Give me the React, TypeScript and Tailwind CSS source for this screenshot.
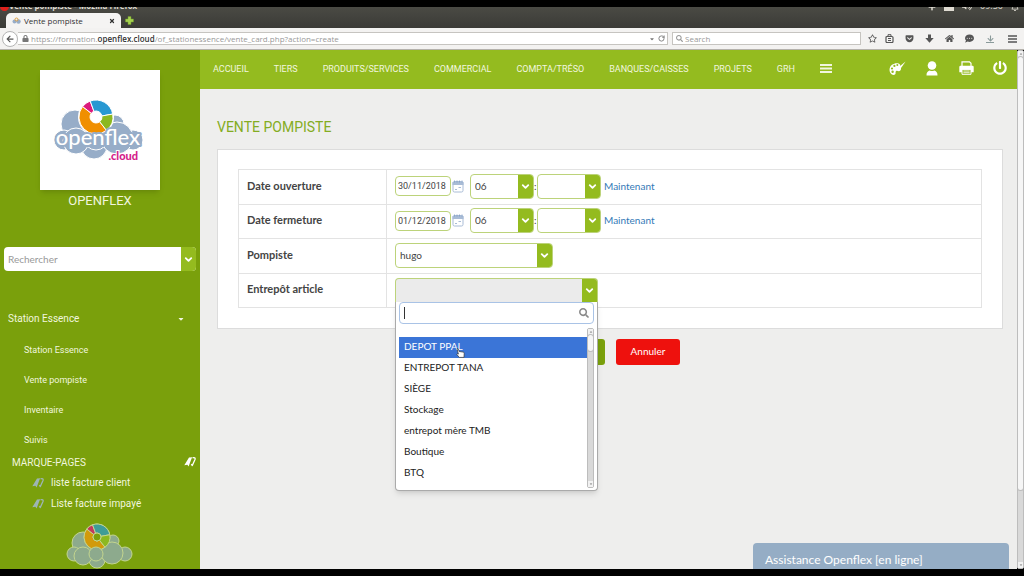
import { useState, type ReactNode } from 'react';
import clsx from 'clsx';
import {
  FaArrowDown,
  FaArrowLeft,
  FaCaretDown,
  FaCommentDots,
  FaGetPocket,
  FaHome,
  FaLock,
  FaPlus,
  FaPowerOff,
  FaRegBell,
  FaRegStar,
  FaSearch,
  FaVolumeUp,
} from 'react-icons/fa';
import { ChevronDown, RotateCw, X } from 'lucide-react';

const NAV_ITEMS = [
  'ACCUEIL',
  'TIERS',
  'PRODUITS/SERVICES',
  'COMMERCIAL',
  'COMPTA/TRÉSO',
  'BANQUES/CAISSES',
  'PROJETS',
  'GRH',
];

const MENU_ITEMS = ['Station Essence', 'Vente pompiste', 'Inventaire', 'Suivis'];

const BOOKMARKS = ['liste facture client', 'Liste facture impayé'];

const WAREHOUSES = [
  'DEPOT PPAL',
  'ENTREPOT TANA',
  'SIÈGE',
  'Stockage',
  'entrepot mère TMB',
  'Boutique',
  'BTQ',
];

// Ring slice between two angles (degrees, clockwise from 3 o'clock)
function slice(cx: number, cy: number, outer: number, inner: number, from: number, to: number) {
  const point = (r: number, deg: number) => {
    const a = (deg * Math.PI) / 180;
    return `${(cx + r * Math.cos(a)).toFixed(2)} ${(cy + r * Math.sin(a)).toFixed(2)}`;
  };
  const large = to - from > 180 ? 1 : 0;
  return `M${point(outer, from)}A${outer} ${outer} 0 ${large} 1 ${point(outer, to)}L${point(inner, to)}A${inner} ${inner} 0 ${large} 0 ${point(inner, from)}Z`;
}

function OpenflexLogo() {
  return (
    <svg viewBox="0 0 120 120" className="size-full" role="img" aria-label="openflex.cloud">
      <g fill="#97adc8" stroke="#fff" strokeWidth="1">
        <circle cx="75" cy="54" r="9" />
        <circle cx="35" cy="54" r="14" />
        <circle cx="54" cy="76" r="13" />
        <circle cx="24" cy="70" r="10" />
        <circle cx="93" cy="70" r="10" />
        <circle cx="36" cy="71" r="13" />
        <circle cx="77" cy="68" r="16" />
        <circle cx="56" cy="68" r="12" />
      </g>
      <circle cx="56" cy="47" r="18" fill="#fff" />
      <g stroke="#fff" strokeWidth="1">
        <path d={slice(56, 47, 17, 6, 52, 218)} fill="#f08f00" />
        <path d={slice(56, 47, 17, 6, 218, 250)} fill="#dc1a7c" />
        <path d={slice(56, 47, 17, 6, 250, 350)} fill="#2898d2" />
        <path d={slice(56, 47, 17, 6, 350, 412)} fill="#8cb820" />
      </g>
      <text
        x="58"
        y="75"
        textAnchor="middle"
        fontSize="22"
        className="font-['Lato',sans-serif] font-medium"
        fill="#fff"
        stroke="#97adc8"
        strokeWidth="4"
        strokeLinejoin="round"
        paintOrder="stroke"
      >
        openflex
      </text>
      <text
        x="98"
        y="90"
        textAnchor="end"
        fontSize="11"
        className="font-['Lato',sans-serif] font-black"
        fill="#d4218a"
        stroke="#fff"
        strokeWidth="2"
        paintOrder="stroke"
      >
        .cloud
      </text>
    </svg>
  );
}

function FooterCloud() {
  return (
    <svg viewBox="0 0 67 46" className="w-[67px] h-[46px]" aria-hidden="true">
      <g fill="#8daa8d" stroke="#c3d58f" strokeWidth="1">
        <circle cx="47" cy="18" r="6" />
        <circle cx="17" cy="20" r="11" />
        <circle cx="31" cy="37" r="8" />
        <circle cx="8" cy="31" r="7" />
        <circle cx="59" cy="31" r="7" />
        <circle cx="17" cy="33" r="9" />
        <circle cx="46" cy="30" r="11" />
        <circle cx="31" cy="14" r="13" />
        <path d={slice(31, 14, 13, 4, 52, 218)} fill="#d29a0a" />
        <path d={slice(31, 14, 13, 4, 218, 250)} fill="#c43a5c" />
        <path d={slice(31, 14, 13, 4, 250, 350)} fill="#3f9c98" />
        <path d={slice(31, 14, 13, 4, 350, 412)} fill="#8cb820" />
        <circle cx="31" cy="14" r="4" fill="#7aa00c" />
        <circle cx="30" cy="31" r="7" />
      </g>
    </svg>
  );
}

function BookmarksIcon({ className }: { className?: string }) {
  return (
    <svg viewBox="0 0 12 10" className={className} aria-hidden="true">
      <path d="M5 .6 8.600.3Q7.800 1 7.400 2L4.600 9.500 3.400 7.700.3 8.200z" fill="currentColor" />
      <path
        d="M8.600.8q2.900-.5 2.500 1.400L8.300 8.600 7.300 7.200"
        fill="none"
        stroke="currentColor"
        strokeWidth="1.300"
        strokeLinejoin="round"
      />
    </svg>
  );
}

function PaletteIcon() {
  return (
    <svg viewBox="0 0 17 15" className="w-[17px] h-[15px]" aria-hidden="true">
      <path
        d="M11 3.4C9.5 1.6 5.6 1.8 3 3.8.4 5.8-.2 9.6 1.4 12c1.3 2 3.7 2.4 4.8 1.3.9-1-.2-2.2.8-3.1 1.1-1 2.7.6 4-.4.8-.6 1-1.6 1-2.6"
        fill="#fff"
      />
      <path d="M16.6.4 10.5 5.6 8.6 8.4 12 7z" fill="#fff" />
      <g fill="#94bb1f">
        <circle cx="3" cy="7.500" r="1.100" />
        <circle cx="5.400" cy="4.900" r="1.100" />
        <circle cx="8.300" cy="4" r="1" />
        <circle cx="3.600" cy="10.800" r="1.200" />
      </g>
    </svg>
  );
}

function UserIcon() {
  return (
    <svg viewBox="0 0 12 15" className="w-3 h-[15px]" fill="#fff" aria-hidden="true">
      <circle cx="6" cy="4.500" r="4.300" />
      <path d="M.5 14.500c-.3-3 1.700-4.700 3.300-4.900q2.200 1 4.400 0c1.600.2 3.600 1.900 3.300 4.900z" />
    </svg>
  );
}

function PrinterIcon() {
  return (
    <svg viewBox="0 0 15 14" className="w-[15px] h-[14px]" aria-hidden="true">
      <path d="M3 5V.8h7.500L12 2.300V5" fill="none" stroke="#fff" strokeWidth="1.200" />
      <path d="M1.500 4.800h12q1.200 0 1.200 1.200v5.200H.3V6q0-1.200 1.200-1.200z" fill="#fff" />
      <path d="M3 8.400h9v4.900H3z" fill="#94bb1f" stroke="#fff" strokeWidth="1" />
      <path d="M4.400 10h6.200M4.400 11.700h6.200" stroke="#fff" strokeWidth=".8" />
    </svg>
  );
}

function CalendarIcon() {
  return (
    <svg viewBox="0 0 12 13" className="w-3 h-[13px]" aria-hidden="true">
      <rect x="1" y="1.500" width="10" height="10.500" rx="1.500" fill="#fff" stroke="#a9bcd6" />
      <path d="M.5 2h11v3H.5z" fill="#a9bcd6" />
      <path d="M2.500.5v2M5 .5v2M7.500.5v2M10 .5v2" stroke="#7f9cc4" strokeWidth=".8" />
      <path d="M3 9.500h2M6.500 7.500h2.500" stroke="#a9bcd6" />
    </svg>
  );
}

function ChevronBox() {
  return (
    <span className="pointer-events-none flex w-[15px] shrink-0 items-center justify-center bg-[#94bb1f]">
      <ChevronDown className="size-[11px] text-white" strokeWidth={4} />
    </span>
  );
}

function FlexSelect({
  id,
  label,
  options,
  className,
}: {
  id?: string;
  label: string;
  options: string[];
  className?: string;
}) {
  return (
    <div
      className={clsx(
        'flex h-[25px] overflow-hidden rounded-[4px] border border-[#bcd37a] bg-white',
        className,
      )}
    >
      <select
        id={id}
        aria-label={label}
        className="min-w-0 flex-1 appearance-none pl-1 text-[10px] text-[#444] outline-none"
      >
        {options.map((option) => (
          <option key={option}>{option}</option>
        ))}
      </select>
      <ChevronBox />
    </div>
  );
}

function DateField({ id, value }: { id: string; value: string }) {
  return (
    <div className="flex items-center">
      <input
        id={id}
        defaultValue={value}
        className="h-5 w-14 rounded-[4px] border border-[#bcd37a] bg-white pl-[2px] font-['Roboto',sans-serif] text-[9px] text-[#444] outline-none"
      />
      <button type="button" aria-label="Calendrier" className="ml-px">
        <CalendarIcon />
      </button>
      <FlexSelect label="Heure" options={['06']} className="ml-[6px] w-16" />
      <span className="w-[3px] text-[10px] text-[#444]">:</span>
      <FlexSelect label="Minute" options={['']} className="w-16" />
      <a href="#" className="ml-[3px] text-[10px] text-[#337ab7]">
        Maintenant
      </a>
    </div>
  );
}

function WarehousePicker() {
  const [hovered, setHovered] = useState(WAREHOUSES[0]);

  return (
    <div className="relative w-[203px]">
      <button
        type="button"
        id="warehouse"
        aria-haspopup="listbox"
        aria-expanded="true"
        className="flex h-6 w-full overflow-hidden rounded-t-[4px] border border-b-0 border-[#bcd37a] bg-[#ebebeb]"
      >
        <span className="flex-1" />
        <span className="flex h-full">
          <ChevronBox />
        </span>
      </button>
      <div className="absolute top-6 left-0 z-10 w-full rounded-b-[4px] border border-t-0 border-[#aaa] bg-white px-[3px] pb-[2px] shadow-md">
        <div className="flex h-[22px] items-center rounded-[4px] border border-[#a9c3e6] bg-white px-1">
          <span className="h-3 w-px bg-[#333]" />
          <input aria-label="Rechercher un entrepôt" className="min-w-0 flex-1 text-[10px] outline-none" />
          <FaSearch className="size-[10px] text-[#8a8a8a]" />
        </div>
        <div className="mt-1 flex h-40">
          <ul role="listbox" aria-labelledby="warehouse-label" className="flex-1 overflow-hidden pt-[9px]">
            {WAREHOUSES.map((name) => (
              <li
                key={name}
                role="option"
                aria-selected={name === hovered}
                onMouseEnter={() => setHovered(name)}
                className={clsx(
                  'h-[21px] px-[5px] text-[10px] leading-[19px]',
                  name === hovered ? 'bg-[#3b75d7] text-white' : 'text-[#222]',
                )}
              >
                {name}
              </li>
            ))}
          </ul>
          <Scrollbar className="w-[7px]" thumb="h-4" />
        </div>
        <Pointer />
      </div>
    </div>
  );
}

function Pointer() {
  return (
    <svg viewBox="0 0 9 10" className="absolute top-[46px] left-[60px] w-[9px] h-[10px]" aria-hidden="true">
      <path
        d="M1 .6q1-.4 1.400.6l.8 2.300 4 .6q1.200.3 1 1.500L8 9.400H3.200L.8 6.300q.4-1 1.600-.2z"
        fill="#fff"
        stroke="#333"
        strokeWidth=".7"
      />
    </svg>
  );
}

function Scrollbar({ className, thumb }: { className?: string; thumb: string }) {
  return (
    <div
      className={clsx(
        'flex shrink-0 flex-col items-center rounded-[2px] border border-[#bdbdbd] bg-[#d9d9d9]',
        className,
      )}
      aria-hidden="true"
    >
      <span className="flex h-[6px] w-full items-center justify-center bg-[#f2f2f2]">
        <FaCaretDown className="size-1 rotate-180 text-[#777]" />
      </span>
      <span className={clsx('w-full rounded-[3px] bg-[#f6f6f6] ring-1 ring-[#bdbdbd]', thumb)} />
      <span className="flex-1" />
      <span className="flex h-[6px] w-full items-center justify-center bg-[#f2f2f2]">
        <FaCaretDown className="size-1 text-[#777]" />
      </span>
    </div>
  );
}

function BrowserChrome() {
  return (
    <div className="shrink-0 font-['Open_Sans',sans-serif]">
      <div className="bg-gradient-to-b from-[#4a4a44] to-[#3b3b37]">
        <div className="flex h-1 items-end justify-between overflow-hidden pr-[5px] text-[#dfdbd2]">
          <span className="flex items-end">
            <span className="size-[9px] rounded-full bg-[#e0201b]" />
            <span className="text-[8px] leading-[10px] font-bold">Vente pompiste - Mozilla Firefox</span>
          </span>
          <span className="flex items-end gap-2">
            <FaPlus className="size-2" />
            <span className="h-2 w-[10px] bg-[#dfdbd2]" />
            <FaVolumeUp className="size-[10px]" />
            <span className="text-[9px] leading-[10px]">09:50</span>
            <FaRegBell className="size-2" />
          </span>
        </div>
        <div className="flex h-[17px] items-end">
          <div className="ml-[6px] flex h-[15px] w-[115px] items-center rounded-t-[5px] bg-[#f5f4f3] px-[6px]">
            <svg viewBox="0 0 9 7" className="w-[9px] h-[7px]" aria-hidden="true">
              <circle cx="2.500" cy="4.500" r="2" fill="#97adc8" />
              <circle cx="6.500" cy="4.500" r="2.200" fill="#97adc8" />
              <circle cx="4.500" cy="2.500" r="1.500" fill="none" stroke="#e0a040" />
            </svg>
            <span className="ml-[3px] flex-1 text-[8px] text-[#333]">Vente pompiste</span>
            <button type="button" aria-label="Fermer l’onglet">
              <X className="size-[6px] text-[#333]" strokeWidth={5} />
            </button>
          </div>
          <button type="button" aria-label="Nouvel onglet" className="mb-[3px] ml-1">
            <svg viewBox="0 0 9 9" className="size-[9px]" aria-hidden="true">
              <path d="M3 .5h3V3h2.500v3H6v2.500H3V6H.5V3H3z" fill="#a5d14f" stroke="#6f9a2a" strokeWidth=".5" />
            </svg>
          </button>
        </div>
      </div>

      <div className="flex h-[22px] items-center border-b border-[#b5b2ac] bg-[#f3f2f1] pr-[7px] text-[#555]">
        <button
          type="button"
          aria-label="Page précédente"
          className="ml-[2px] flex size-4 items-center justify-center rounded-full border border-[#b4b4b4] bg-white"
        >
          <FaArrowLeft className="size-2" />
        </button>
        <div className="flex h-[13px] min-w-0 flex-1 items-center border border-l-0 border-[#c6c4c0] bg-white pr-[2px] pl-1">
          <FaLock className="size-[7px] text-[#777]" />
          <span className="ml-[2px] flex-1 text-[8px] leading-3 whitespace-nowrap text-[#999]">
            https://formation.<span className="font-semibold text-[#333]">openflex.cloud</span>
            /of_stationessence/vente_card.php?action=create
          </span>
          <FaCaretDown className="size-[6px] text-[#777]" />
          <RotateCw className="ml-[3px] size-[7px] text-[#777]" strokeWidth={3} />
        </div>
        <label className="ml-1 flex h-[13px] w-[189px] items-center border border-[#c6c4c0] bg-white pl-[3px]">
          <FaSearch className="size-[7px] text-[#999]" />
          <input
            aria-label="Search"
            placeholder="Search"
            className="ml-[2px] min-w-0 flex-1 text-[8px] outline-none placeholder:text-[#999]"
          />
        </label>
        <div className="ml-[7px] flex items-center">
          <FaRegStar className="size-[9px]" />
          <svg viewBox="0 0 9 9" className="ml-2 size-[9px]" fill="none" aria-hidden="true">
            <rect x="1" y="2.500" width="7" height="6" rx="1" stroke="#555" strokeWidth="1.200" />
            <path d="M3 2.500V.7h3v1.800M3 4.500h3M3 6.500h3" stroke="#555" />
          </svg>
          <FaGetPocket className="ml-[11px] size-[9px]" />
          <svg viewBox="0 0 9 9" className="ml-[11px] size-[9px]" fill="#555" aria-hidden="true">
            <path d="M3 .5h3V4h2.700L4.500 8.700.3 4H3z" />
          </svg>
          <FaHome className="ml-[11px] size-[9px]" />
          <FaCommentDots className="ml-[11px] size-[9px]" />
          <span className="ml-3 flex flex-col items-center text-[#8a9a9a]">
            <FaArrowDown className="size-[7px]" />
            <span className="h-px w-2 bg-current" />
          </span>
          <svg viewBox="0 0 9 8" className="ml-[14px] h-2 w-[9px]" aria-hidden="true">
            <path d="M0 1h9M0 4h9M0 7h9" stroke="#555" strokeWidth="1.700" />
          </svg>
        </div>
      </div>
    </div>
  );
}

function Sidebar() {
  return (
    <aside className="flex w-[200px] shrink-0 flex-col overflow-hidden bg-[#7aa00c] pt-5 text-[#f1f6df]">
      <div className="mx-10 h-[120px] shrink-0 bg-white shadow-md">
        <OpenflexLogo />
      </div>
      <p className="mt-[3px] text-center text-[13px] leading-4">OPENFLEX</p>

      <div className="mx-1 mt-[38px] flex h-6 shrink-0 overflow-hidden rounded-[4px] bg-white">
        <input
          aria-label="Rechercher"
          placeholder="Rechercher"
          className="min-w-0 flex-1 pl-1 font-['Lato',sans-serif] text-[10px] outline-none placeholder:text-[#999]"
        />
        <button type="button" aria-label="Lancer la recherche" className="flex">
          <ChevronBox />
        </button>
      </div>

      <button type="button" className="mt-10 flex h-4 items-center justify-between pr-[15px] pl-2 text-[10px]">
        Station Essence
        <FaCaretDown className="size-2" />
      </button>
      <nav className="mt-2 flex flex-col pl-6">
        {MENU_ITEMS.map((item) => (
          <a key={item} href="#" className="text-[9px] leading-[30px]">
            {item}
          </a>
        ))}
      </nav>

      <div className="flex h-4 items-center justify-between pr-1 pl-3 text-[10px]">
        <span>MARQUE-PAGES</span>
        <BookmarksIcon className="h-[10px] w-3 text-white" />
      </div>
      <ul className="mt-[2px]">
        {BOOKMARKS.map((bookmark) => (
          <li key={bookmark} className="flex h-[21px] items-center pl-8">
            <BookmarksIcon className="h-[10px] w-3 text-[#9db5b5]" />
            <a href="#" className="ml-[7px] text-[10px]">
              {bookmark}
            </a>
          </li>
        ))}
      </ul>
      <div className="mt-[9px] ml-[66px]">
        <FooterCloud />
      </div>
    </aside>
  );
}

function TopNav() {
  return (
    <header className="flex h-[39px] shrink-0 items-center bg-[#94bb1f] pr-[10px] pl-[13px]">
      <nav className="flex items-center gap-[25px]">
        {NAV_ITEMS.map((item) => (
          <a key={item} href="#" className="text-[9px] text-[#f1f6df]">
            {item}
          </a>
        ))}
        <button type="button" aria-label="Plus" className="pb-[3px]">
          <svg viewBox="0 0 12 9" className="h-[9px] w-3" aria-hidden="true">
            <path d="M0 1h12M0 4.500h12M0 8h12" stroke="#f1f6df" strokeWidth="1.800" />
          </svg>
        </button>
      </nav>
      <div className="ml-auto flex items-center pb-[3px]">
        <button type="button" aria-label="Thème">
          <PaletteIcon />
        </button>
        <button type="button" aria-label="Utilisateur" className="ml-5">
          <UserIcon />
        </button>
        <button type="button" aria-label="Imprimer" className="ml-[21px]">
          <PrinterIcon />
        </button>
        <button type="button" aria-label="Déconnexion" className="ml-[19px]">
          <FaPowerOff className="size-[14px] text-white" />
        </button>
      </div>
    </header>
  );
}

function FormRow({
  id,
  label,
  htmlFor,
  children,
}: {
  id?: string;
  label: string;
  htmlFor: string;
  children: ReactNode;
}) {
  return (
    <tr className="h-[34px] border border-[#e3e3e3] odd:h-[35px]">
      <th
        scope="row"
        className="w-[148px] border-r border-[#e3e3e3] pb-[2px] pl-2 text-left text-[11px] font-bold text-[#444]"
      >
        <label id={id} htmlFor={htmlFor}>
          {label}
        </label>
      </th>
      <td className="pb-[2px] pl-2">{children}</td>
    </tr>
  );
}

export default function App() {
  return (
    <div className="flex h-screen flex-col bg-black py-[7px] font-['Roboto',sans-serif]">
      <BrowserChrome />
      <div className="flex min-h-0 flex-1">
        <Sidebar />
        <div className="relative flex min-w-0 flex-1 flex-col bg-[#eeeeed]">
          <TopNav />
          <main className="pr-[14px] pl-[17px]">
            <h1 className="mt-7 text-[14px] leading-5 text-[#84ac22]">VENTE POMPISTE</h1>
            <form className="font-['Lato',sans-serif]">
              <div className="mt-3 border border-[#dcdcdc] bg-white p-5 pt-[19px]">
                <table className="w-full border-collapse">
                  <tbody>
                    <FormRow label="Date ouverture" htmlFor="opening">
                      <DateField id="opening" value="30/11/2018" />
                    </FormRow>
                    <FormRow label="Date fermeture" htmlFor="closing">
                      <DateField id="closing" value="01/12/2018" />
                    </FormRow>
                    <FormRow label="Pompiste" htmlFor="attendant">
                      <FlexSelect id="attendant" label="Pompiste" options={['hugo']} className="w-[158px]" />
                    </FormRow>
                    <FormRow id="warehouse-label" label="Entrepôt article" htmlFor="warehouse">
                      <WarehousePicker />
                    </FormRow>
                  </tbody>
                </table>
              </div>
              <div className="mt-[10px] flex justify-center gap-[11px] text-[10px] text-white">
                <button type="submit" className="h-[26px] w-[65px] rounded-[3px] bg-[#7aa00c]">
                  Créer
                </button>
                <button type="button" className="h-[26px] w-16 rounded-[3px] bg-[#ee110d] pb-[2px]">
                  Annuler
                </button>
              </div>
            </form>
          </main>
          <button
            type="button"
            className="absolute right-2 bottom-0 h-[26px] w-64 rounded-t-[4px] bg-[#95adc5] pt-2 pl-3 text-left font-['Lato',sans-serif] text-[12px] text-white"
          >
            Assistance Openflex [en ligne]
          </button>
        </div>
        <Scrollbar className="w-[7px]" thumb="h-[433px]" />
      </div>
    </div>
  );
}
